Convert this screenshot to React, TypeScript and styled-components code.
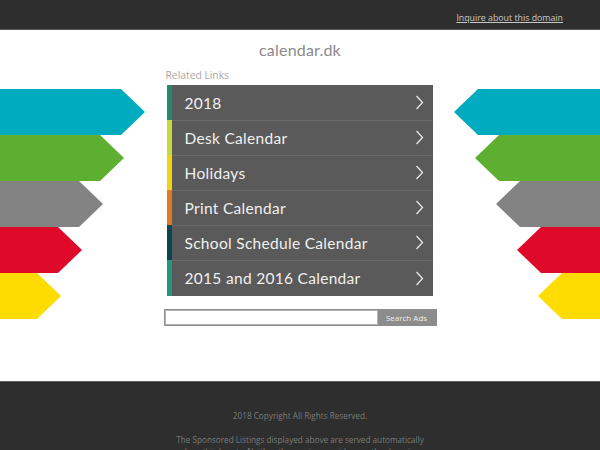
import React from 'react';
import styled, { createGlobalStyle } from 'styled-components';

const GlobalStyle = createGlobalStyle`
  html, body {
    margin: 0;
    padding: 0;
    background: #ffffff;
    overflow: hidden;
  }
  body {
    font-family: 'Lato', 'Open Sans', sans-serif;
  }
`;

const Page = styled.div`
  width: 600px;
  height: 450px;
  display: flex;
  flex-direction: column;
  overflow: hidden;
`;

const TopBar = styled.header`
  height: 24px;
  flex: none;
  background: #2e2e2e;
  border-bottom: 1px solid #5a5a5a;
  display: flex;
  align-items: flex-end;
  justify-content: flex-end;
  padding: 0 37px 5px 0;
`;

const InquireLink = styled.a`
  font-family: 'Open Sans', sans-serif;
  font-size: 8.8px;
  color: #c8c8c8;
  text-decoration: underline;
  line-height: 12px;
`;

const Main = styled.main`
  height: 351px;
  flex: none;
  background: #ffffff;
  padding-top: 10px;
  box-sizing: border-box;
`;

const SiteTitle = styled.h1`
  margin: 0 0 8px;
  text-align: center;
  font-family: 'Lato', sans-serif;
  font-weight: 400;
  font-size: 16px;
  line-height: 20px;
  color: #8a8a8a;
  letter-spacing: 0.2px;
`;

const Stage = styled.div`
  display: grid;
  grid-template-columns: 1fr 273px 1fr;
`;

const ArrowColumn = styled.div<{ $side: 'left' | 'right' }>`
  padding-top: 21px;
  display: flex;
  flex-direction: column;
  align-items: ${(p) => (p.$side === 'left' ? 'flex-start' : 'flex-end')};
`;

const Arrow = styled.div<{ $side: 'left' | 'right'; $color: string }>`
  height: 46px;
  background: ${(p) => p.$color};
  clip-path: ${(p) =>
    p.$side === 'left'
      ? 'polygon(0 0, calc(100% - 24px) 0, 100% 50%, calc(100% - 24px) 100%, 0 100%)'
      : 'polygon(24px 0, 100% 0, 100% 100%, 24px 100%, 0 50%)'};
`;

const Center = styled.div`
  display: flex;
  flex-direction: column;
`;

const RelatedTitle = styled.div`
  font-family: 'Open Sans', sans-serif;
  font-size: 10.3px;
  line-height: 14px;
  color: #a8a8a8;
  padding-left: 2px;
  margin-bottom: 3px;
`;

const LinkList = styled.ul`
  list-style: none;
  margin: 0 4px 0 3px;
  padding: 0;
  background: #5a5a5a;
`;

const LinkRow = styled.li<{ $accent: string }>`
  height: 35px;
  display: flex;
  align-items: center;
  justify-content: space-between;
  padding: 0 9px 0 13px;
  border-left: 5px solid ${(p) => p.$accent};
  & + & {
    box-shadow: inset 0 1px 0 #6a6a6a;
  }
  &:last-child {
    height: 36px;
  }
`;

const LinkLabel = styled.span`
  font-family: 'Lato', sans-serif;
  font-size: 15.5px;
  color: #f0f0f0;
  letter-spacing: 0.3px;
`;

const SearchForm = styled.form`
  margin-top: 13px;
  height: 17px;
  display: flex;
  background: #8c8c8c;
  padding: 1px;
  box-sizing: border-box;
`;

const SearchInput = styled.input`
  width: 213px;
  height: 15px;
  border: 1px solid #b4b4b4;
  box-sizing: border-box;
  background: #ffffff;
  padding: 0;
  margin: 0;
`;

const SearchButton = styled.button`
  flex: 1;
  border: none;
  background: transparent;
  font-family: 'Open Sans', sans-serif;
  font-size: 8px;
  color: #ececec;
  padding: 0;
  cursor: pointer;
`;

const Footer = styled.footer`
  flex: 1;
  background: #2e2e2e;
  border-top: 1px solid #5c5c5c;
  display: flex;
  flex-direction: column;
  align-items: center;
  padding-top: 28px;
  font-family: 'Open Sans', sans-serif;
  font-size: 8.2px;
  color: #7a7a7a;
`;

const FooterLine = styled.p`
  margin: 0 0 12px;
  text-align: center;
  line-height: 12px;
  max-width: 254px;
`;

const Chevron = () => (
  <svg width="9" height="15" viewBox="0 0 9 15">
    <polyline points="1.5,1 7.5,7.5 1.5,14" fill="none" stroke="#e6e6e6" strokeWidth="1.3" />
  </svg>
);

const arrowColors = ['#00abc0', '#5eae32', '#838383', '#df0a2a', '#ffdc00'];
const leftWidths = [145, 124, 103, 82, 61];
const rightWidths = [146, 125, 104, 83, 62];

const links = [
  { label: '2018', accent: '#27896b' },
  { label: 'Desk Calendar', accent: '#c6d93c' },
  { label: 'Holidays', accent: '#f4d210' },
  { label: 'Print Calendar', accent: '#e27b1c' },
  { label: 'School Schedule Calendar', accent: '#0c4552' },
  { label: '2015 and 2016 Calendar', accent: '#23977a' },
];

const App: React.FC = () => (
  <>
    <GlobalStyle />
    <Page>
      <TopBar>
        <InquireLink href="#">Inquire about this domain</InquireLink>
      </TopBar>

      <Main>
        <SiteTitle>calendar.dk</SiteTitle>
        <Stage>
          <ArrowColumn $side="left">
            {arrowColors.map((c, i) => (
              <Arrow key={c} $side="left" $color={c} style={{ width: leftWidths[i] }} />
            ))}
          </ArrowColumn>

          <Center>
            <RelatedTitle>Related Links</RelatedTitle>
            <LinkList>
              {links.map((l) => (
                <LinkRow key={l.label} $accent={l.accent}>
                  <LinkLabel>{l.label}</LinkLabel>
                  <Chevron />
                </LinkRow>
              ))}
            </LinkList>
            <SearchForm onSubmit={(e) => e.preventDefault()}>
              <SearchInput type="text" />
              <SearchButton type="submit">Search Ads</SearchButton>
            </SearchForm>
          </Center>

          <ArrowColumn $side="right">
            {arrowColors.map((c, i) => (
              <Arrow key={c} $side="right" $color={c} style={{ width: rightWidths[i] }} />
            ))}
          </ArrowColumn>
        </Stage>
      </Main>

      <Footer>
        <FooterLine>2018 Copyright All Rights Reserved.</FooterLine>
        <FooterLine>
          The Sponsored Listings displayed above are served automatically by a third party.
          Neither the service provider nor the domain owner maintain any relationship with the
          advertisers.
        </FooterLine>
      </Footer>
    </Page>
  </>
);

export default App;
